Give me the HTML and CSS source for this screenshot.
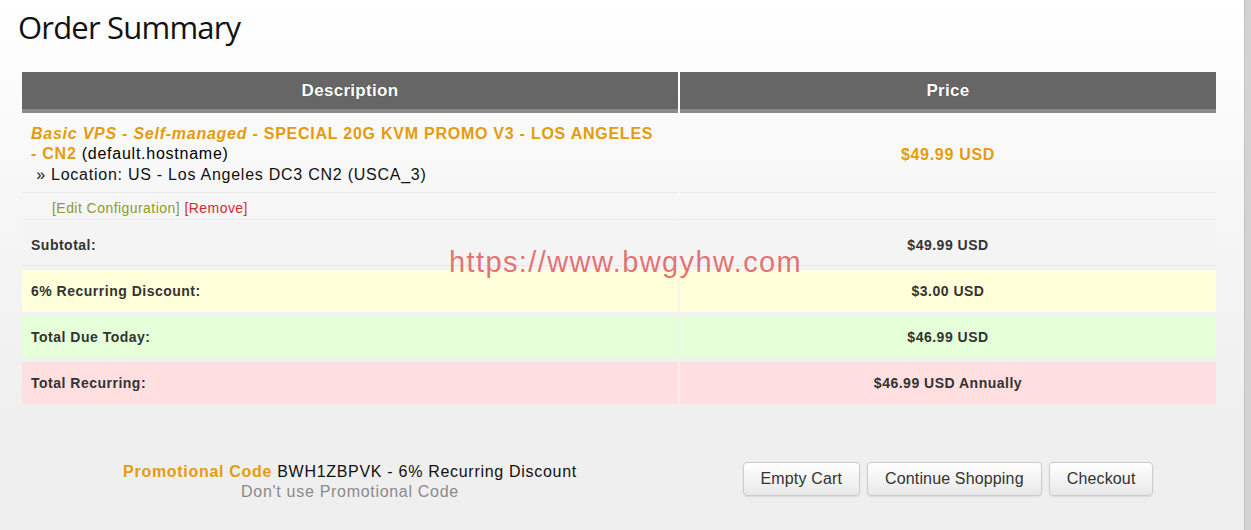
FILE: index.html
```html
<!DOCTYPE html>
<html lang="en">
<head>
<meta charset="utf-8">
<title>Order Summary</title>
<link rel="stylesheet" href="styles.css">
</head>
<body>
<div class="page">
  <main class="content">
    <h1 class="title">Order Summary</h1>
    <table class="cart">
      <thead>
        <tr>
          <th class="col-desc">Description</th>
          <th class="col-price">Price</th>
        </tr>
      </thead>
      <tbody>
        <tr class="row-product">
          <td class="desc">
            <div class="prod-name"><em>Basic VPS - Self-managed</em> - SPECIAL 20G KVM PROMO V3 - LOS ANGELES - CN2 <span class="host">(default.hostname)</span></div>
            <div class="prod-opt">&nbsp;» Location: US - Los Angeles DC3 CN2 (USCA_3)</div>
          </td>
          <td class="price price-orange">$49.99 USD</td>
        </tr>
        <tr class="row-actions">
          <td class="actions"><a class="edit" href="#">[Edit Configuration]</a> <a class="remove" href="#">[Remove]</a></td>
          <td></td>
        </tr>
        <tr class="row-sum row-subtotal">
          <td class="label">Subtotal:</td>
          <td class="amount">$49.99 USD</td>
        </tr>
        <tr class="row-sum row-discount">
          <td class="label">6% Recurring Discount:</td>
          <td class="amount">$3.00 USD</td>
        </tr>
        <tr class="row-sum row-due">
          <td class="label">Total Due Today:</td>
          <td class="amount">$46.99 USD</td>
        </tr>
        <tr class="row-sum row-recurring">
          <td class="label">Total Recurring:</td>
          <td class="amount">$46.99 USD Annually</td>
        </tr>
      </tbody>
    </table>
    <div class="footer">
      <div class="promo">
        <div class="promo-line"><span class="promo-label">Promotional Code</span> BWH1ZBPVK - 6% Recurring Discount</div>
        <a class="promo-remove" href="#">Don't use Promotional Code</a>
      </div>
      <div class="buttons">
        <button class="btn" type="button">Empty Cart</button>
        <button class="btn" type="button">Continue Shopping</button>
        <button class="btn" type="button">Checkout</button>
      </div>
    </div>
    <div class="watermark">https://www.bwgyhw.com</div>
  </main>
  <div class="edge"></div>
</div>
</body>
</html>
```
FILE: styles.css
```css
html, body {
  margin: 0;
  padding: 0;
}
body {
  width: 1251px;
  height: 530px;
  overflow: hidden;
  font-family: "Liberation Sans", Arial, sans-serif;
  color: #000;
}
.page {
  display: flex;
  height: 530px;
}
.content {
  position: relative;
  width: 1244px;
  height: 530px;
  background: linear-gradient(to bottom, #ffffff 0%, #f5f5f5 45%, #efefef 80%, #efefef 100%);
}
.edge {
  width: 7px;
  height: 530px;
  background: #d2d2d2;
  border-left: 1px solid #c4c4c4;
  box-sizing: border-box;
}
.title {
  margin: 0;
  padding: 5px 0 0 18px;
  height: 58px;
  box-sizing: border-box;
  font-family: "Open Sans", "Segoe UI", sans-serif;
  font-weight: 400;
  font-size: 31px;
  line-height: 44px;
  color: #111;
  letter-spacing: -0.8px;
}
.cart {
  margin: 10px 0 0 20px;
  width: 1198px;
  border-collapse: separate;
  border-spacing: 2px 4px;
  table-layout: fixed;
}
.col-desc { width: 656px; }
.col-price { width: 536px; }
.cart th {
  height: 37px;
  padding: 0;
  background: #666666;
  border-bottom: 4px solid #8a8a8a;
  color: #fff;
  font-size: 17px;
  font-weight: bold;
  letter-spacing: 0.3px;
  text-align: center;
  text-shadow: 0 0 1px rgba(0,0,0,0.4);
}
.cart td {
  padding: 0;
  vertical-align: middle;
}
.row-product td {
  height: 75px;
  border-bottom: 1px solid #e9e9e9;
}
.desc {
  padding: 0 15px 0 9px !important;
  font-size: 16px;
  line-height: 20.5px;
  letter-spacing: 0.75px;
}
.prod-name {
  color: #e59b0c;
  font-weight: bold;
}
.prod-name em {
  font-style: italic;
}
.host {
  color: #000;
  font-weight: normal;
}
.prod-opt {
  color: #111;
}
.price {
  text-align: center;
  font-weight: bold;
  font-size: 16px;
  letter-spacing: 0.7px;
}
.price-orange {
  color: #e59b0c;
}
.row-actions td {
  height: 22px;
  border-bottom: 1px solid #e9e9e9;
}
.actions {
  padding-left: 30px !important;
  font-size: 14px;
  letter-spacing: 0.45px;
}
.actions a {
  text-decoration: none;
}
.edit { color: #8d9a2c; }
.remove { color: #d42a2a; }
.row-sum td {
  height: 42px;
  font-size: 14px;
  font-weight: bold;
  color: #333;
  letter-spacing: 0.5px;
}
.row-sum .label {
  padding-left: 9px;
}
.row-sum .amount {
  text-align: center;
}
.row-subtotal td {
  height: 41px;
  background: #f4f4f4;
  border-bottom: 1px solid #e7e7e7;
}
.row-discount td { background: #ffffd9; }
.row-due td { background: #e5ffd9; }
.row-recurring td { background: #ffdfdf; }
.footer {
  display: grid;
  grid-template-columns: 656px 536px;
  column-gap: 2px;
  margin: 54px 0 0 22px;
  align-items: start;
}
.promo {
  text-align: center;
  font-size: 16px;
  line-height: 20px;
  color: #111;
  letter-spacing: 0.7px;
}
.promo-label {
  color: #e59b0c;
  font-weight: bold;
}
.promo-remove {
  color: #8a8a8a;
  text-decoration: none;
}
.buttons {
  display: flex;
  justify-content: center;
  gap: 7px;
}
.btn {
  font-family: "Liberation Sans", Arial, sans-serif;
  font-size: 16px;
  letter-spacing: 0.15px;
  color: #333;
  height: 34px;
  padding: 0 17px;
  background: linear-gradient(to bottom, #ffffff 0%, #e8e8e8 100%);
  border: 1px solid #cccccc;
  border-radius: 4px;
  box-shadow: 0 1px 2px rgba(0,0,0,0.08);
}
.watermark {
  position: absolute;
  left: 449px;
  top: 246px;
  font-family: "Liberation Sans", Arial, sans-serif;
  font-size: 29px;
  letter-spacing: 1.4px;
  color: rgba(225, 90, 90, 0.85);
  pointer-events: none;
}
```
